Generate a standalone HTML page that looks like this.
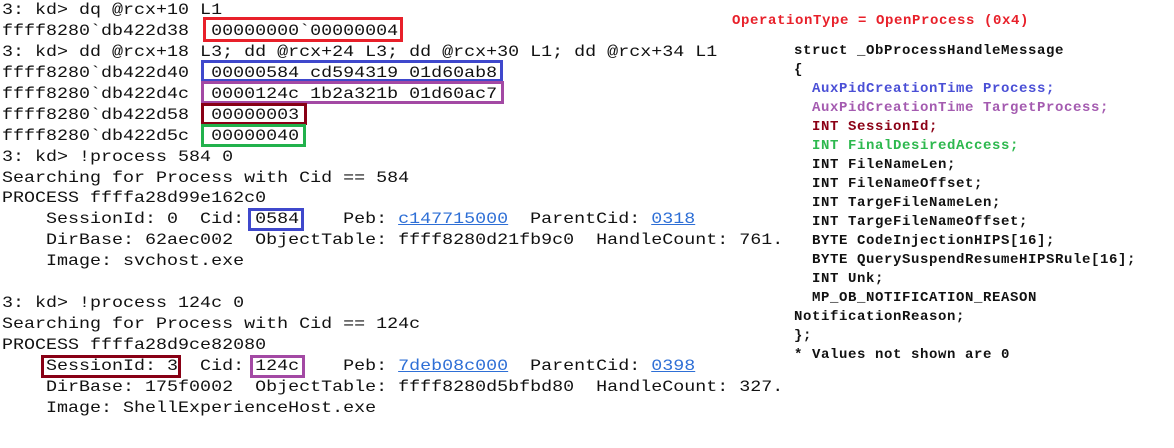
<!DOCTYPE html>
<html><head><meta charset="utf-8"><style>
html,body{margin:0;padding:0;background:#fff;width:1174px;height:448px;overflow:hidden;position:relative}
.l{position:absolute;left:2px;top:0;margin:0;font-family:"Liberation Mono","Courier New",monospace;font-size:16px;line-height:20.93px;color:#111;transform:scaleX(1.146);transform-origin:0 0;white-space:pre}
.l a{color:#2e6fd6;text-decoration:underline}
.b{position:absolute;border:3px solid;box-sizing:border-box}
.r{position:absolute;left:794px;top:42px;margin:0;font-family:"Liberation Mono","DejaVu Sans Mono",monospace;font-weight:bold;font-size:14px;letter-spacing:0.6px;line-height:19px;color:#111;white-space:pre}
.op{position:absolute;left:732px;top:13px;font-family:"Liberation Mono",monospace;font-weight:bold;font-size:14px;letter-spacing:0.6px;color:#e8202a;white-space:pre}
</style></head><body>
<pre class="l">3: kd&gt; dq @rcx+10 L1
ffff8280`db422d38  00000000`00000004
3: kd&gt; dd @rcx+18 L3; dd @rcx+24 L3; dd @rcx+30 L1; dd @rcx+34 L1
ffff8280`db422d40  00000584 cd594319 01d60ab8
ffff8280`db422d4c  0000124c 1b2a321b 01d60ac7
ffff8280`db422d58  00000003
ffff8280`db422d5c  00000040
3: kd&gt; !process 584 0
Searching for Process with Cid == 584
PROCESS ffffa28d99e162c0
    SessionId: 0  Cid: 0584    Peb: <a>c147715000</a>  ParentCid: <a>0318</a>
    DirBase: 62aec002  ObjectTable: ffff8280d21fb9c0  HandleCount: 761.
    Image: svchost.exe

3: kd&gt; !process 124c 0
Searching for Process with Cid == 124c
PROCESS ffffa28d9ce82080
    SessionId: 3  Cid: 124c    Peb: <a>7deb08c000</a>  ParentCid: <a>0398</a>
    DirBase: 175f0002  ObjectTable: ffff8280d5bfbd80  HandleCount: 327.
    Image: ShellExperienceHost.exe</pre>
<div class="b" style="left:203px;top:17px;width:200px;height:25px;border-color:#e8202a"></div>
<div class="b" style="left:201px;top:60px;width:302px;height:22px;border-color:#3f48cc"></div>
<div class="b" style="left:201px;top:81px;width:303px;height:23px;border-color:#a349a4"></div>
<div class="b" style="left:201px;top:103px;width:106px;height:22px;border-color:#880015"></div>
<div class="b" style="left:201px;top:124px;width:105px;height:23px;border-color:#22b14c"></div>
<div class="b" style="left:248px;top:208px;width:56px;height:23px;border-color:#3f48cc"></div>
<div class="b" style="left:41px;top:355px;width:140px;height:23px;border-color:#880015"></div>
<div class="b" style="left:250px;top:355px;width:55px;height:23px;border-color:#a349a4"></div>
<div class="op">OperationType = OpenProcess (0x4)</div>
<pre class="r">struct _ObProcessHandleMessage
{
  <span style="color:#4a4fd6">AuxPidCreationTime Process;</span>
  <span style="color:#a45bb0">AuxPidCreationTime TargetProcess;</span>
  <span style="color:#8b0015">INT SessionId;</span>
  <span style="color:#2db84e">INT FinalDesiredAccess;</span>
  INT FileNameLen;
  INT FileNameOffset;
  INT TargeFileNameLen;
  INT TargeFileNameOffset;
  BYTE CodeInjectionHIPS[16];
  BYTE QuerySuspendResumeHIPSRule[16];
  INT Unk;
  MP_OB_NOTIFICATION_REASON
NotificationReason;
};
* Values not shown are 0</pre>
</body></html>
